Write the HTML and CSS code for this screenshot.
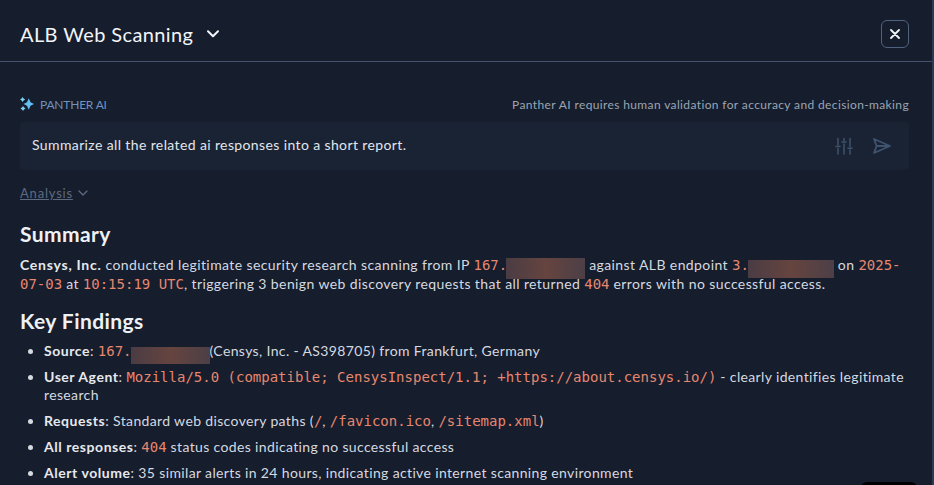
FILE: index.html
```html
<!DOCTYPE html>
<html lang="en">
<head>
<meta charset="utf-8">
<title>ALB Web Scanning</title>
<link rel="stylesheet" href="styles.css">
</head>
<body>
<div class="panel">
  <header class="head">
    <div class="title-wrap">
      <h1 class="title">ALB Web Scanning</h1>
      <svg class="title-chev" width="12" height="8" viewBox="0 0 12 8"><path d="M1 1.2 6 6.2 11 1.2" fill="none" stroke="#f2f5fa" stroke-width="2" stroke-linecap="round" stroke-linejoin="round"/></svg>
    </div>
    <button class="close" aria-label="Close"><svg width="10" height="10" viewBox="0 0 10 10"><path d="M1 1 9 9M9 1 1 9" stroke="#f2f5fa" stroke-width="1.8" stroke-linecap="round"/></svg></button>
  </header>
  <main class="body">
    <div class="ai-row">
      <div class="brand">
        <svg class="spark" width="14" height="14" viewBox="0 0 14 14"><path fill="#62bff5" d="M8.8 1.2 10.5 5.3 14 7 10.5 8.7 8.8 12.8 7 8.7 3.6 7 7 5.3Z"/><path fill="#7fd0f5" d="M2.6 0 3.6 1.5 5.2 2.5 3.6 3.5 2.6 5 1.6 3.5 0 2.5 1.6 1.5Z"/><path fill="#7fd0f5" d="M3 9 4 10.6 5.6 11.6 4 12.5 3 14 2 12.5.4 11.6 2 10.6Z"/></svg>
        <span class="brand-text">PANTHER AI</span>
      </div>
      <span class="disclaimer">Panther AI requires human validation for accuracy and decision-making</span>
    </div>
    <div class="prompt">
      <span class="prompt-text">Summarize all the related ai responses into a short report.</span>
      <div class="prompt-icons">
        <svg width="18" height="18" viewBox="0 0 18 18" fill="none" stroke="#3f536f" stroke-width="1.5" stroke-linecap="round"><path d="M3 1.5V8M3 11.5V17M9 1.5V3.5M9 7V17M15 1.5V9.5M15 13V17M1 9.5H5M7 5H11M13 11.2H17"/></svg>
        <svg width="18" height="16" viewBox="0 0 18 16" fill="none" stroke="#3f536f" stroke-width="1.8" stroke-linejoin="round"><path d="M1 1 17 8 1 15 3.6 8ZM3.6 8H17"/></svg>
      </div>
    </div>
    <div class="analysis"><span class="analysis-link">Analysis</span>
      <svg width="10" height="6" viewBox="0 0 10 6"><path d="M1 1 5 5 9 1" fill="none" stroke="#5d6b80" stroke-width="1.3" stroke-linecap="round" stroke-linejoin="round"/></svg>
    </div>
    <h2 class="h-summary">Summary</h2>
    <p class="para"><strong>Censys, Inc.</strong> conducted legitimate security research scanning from IP <code>167.</code><span class="blur blur-a"></span> against ALB endpoint <code>3.</code><span class="blur blur-b"></span> on <code>2025-07-03</code> at <code>10:15:19 UTC</code>, triggering 3 benign web discovery requests that all returned <code>404</code> errors with no successful access.</p>
    <h2 class="h-findings">Key Findings</h2>
    <ul class="list">
      <li><strong>Source</strong>: <code>167.</code><span class="blur blur-c"></span>(Censys, Inc. - AS398705) from Frankfurt, Germany</li>
      <li><strong>User Agent</strong>: <code>Mozilla/5.0 (compatible; CensysInspect/1.1; +https://about.censys.io/)</code> - clearly identifies legitimate research</li>
      <li><strong>Requests</strong>: Standard web discovery paths (<code>/</code>, <code>/favicon.ico</code>, <code>/sitemap.xml</code>)</li>
      <li><strong>All responses</strong>: <code>404</code> status codes indicating no successful access</li>
      <li><strong>Alert volume</strong>: 35 similar alerts in 24 hours, indicating active internet scanning environment</li>
    </ul>
  </main>
  <div class="corner"></div>
</div>
</body>
</html>
```
FILE: styles.css
```css
* { box-sizing: border-box; }
html, body { margin: 0; height: 100%; overflow: hidden; }
body { background: #161d2c; color: #dfe3ea; font-family: "Lato", "Open Sans", sans-serif; }
.panel { width: 934px; height: 485px; position: relative; overflow: hidden; border-right: 2px solid #2c3b52; }
.head { height: 62px; border-bottom: 1px solid #43536c; display: flex; align-items: center; justify-content: space-between; padding: 6px 23px 0 20px; }
.title-wrap { display: flex; align-items: center; gap: 14px; }
.title { margin: 0; font-size: 20px; font-weight: 400; color: #f2f5fa; letter-spacing: .4px; }
.close { width: 28px; height: 28px; padding: 0; border: 1px solid #50637e; border-radius: 6px; background: #161d2c; display: flex; align-items: center; justify-content: center; }
.body { padding: 0 23px 0 20px; }
.ai-row { display: flex; align-items: center; justify-content: space-between; margin-top: 35px; height: 14px; }
.brand { display: flex; align-items: center; gap: 6px; }
.spark { display: block; }
.brand-text { font-size: 12px; color: #6e93be; letter-spacing: -.2px; }
.disclaimer { font-size: 12px; color: #9ba5b4; letter-spacing: .37px; }
.prompt { margin-top: 11px; height: 48px; background: #1a2333; border-radius: 4px; display: flex; align-items: center; justify-content: space-between; padding: 0 18px 0 12px; }
.prompt-text { font-size: 14px; color: #e2e6ec; letter-spacing: .38px; padding-bottom: 3px; }
.prompt-icons { display: flex; align-items: center; gap: 20px; }
.analysis { margin-top: 15px; display: flex; align-items: center; gap: 5px; height: 16px; font-size: 13px; color: #5d6b80; }
.analysis-link { text-decoration: underline; letter-spacing: .8px; }
h2 { margin: 0; font-size: 21px; font-weight: 700; color: #eef1f5; letter-spacing: .42px; }
.h-summary { margin-top: 20px; line-height: 26px; }
.para { margin: 9px 0 0; font-size: 14px; line-height: 18px; letter-spacing: .4px; color: #d5d9e0; }
strong { font-weight: 700; color: #e6e9ee; letter-spacing: .75px; }
.list strong { letter-spacing: .55px; }
code { font-family: "DejaVu Sans Mono", monospace; font-size: 14px; line-height: 1; color: #e68770; letter-spacing: 0; }
.blur { display: inline-block; height: 21px; margin: -4px 0 -4px -1px; vertical-align: -5px; background: linear-gradient(90deg, #4a3c44, #66443f 50%, #4c3f47); filter: blur(.6px); }
.blur-a { width: 79px; }
.blur-b { width: 86px; height: 18px; vertical-align: -4px; }
.blur-c { width: 79px; height: 17px; vertical-align: -4px; }
.h-findings { margin-top: 15px; line-height: 26px; }
.list { margin: 8px 0 0; padding: 0 0 0 24px; font-size: 14px; line-height: 18px; letter-spacing: .36px; color: #d5d9e0; }
.list li { margin-bottom: 8px; }
.corner { position: absolute; left: 861px; top: 482px; width: 56px; height: 10px; background: #000; border-radius: 6px 6px 0 0; }
```
